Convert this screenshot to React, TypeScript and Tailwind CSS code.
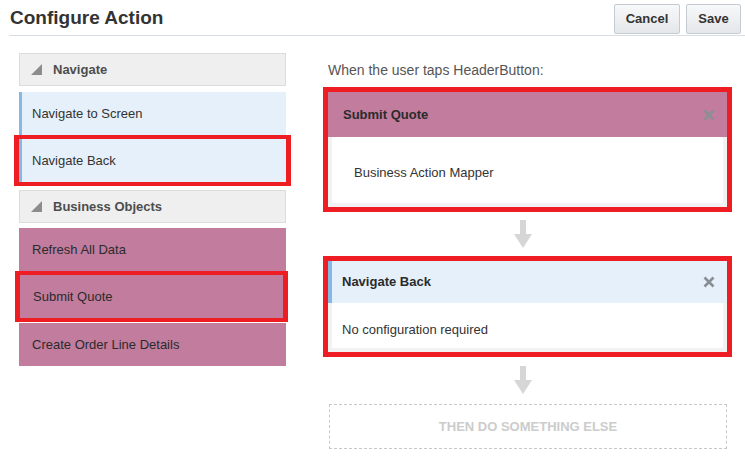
import { ReactNode } from 'react';

const font = { fontFamily: '"Liberation Sans", Arial, sans-serif' };

function CloseIcon({ className }: { className: string }) {
  return (
    <svg width="12" height="12" viewBox="0 0 12 12" className={className}>
      <path d="M1.5 1.5 L10.5 10.5 M10.5 1.5 L1.5 10.5" stroke="currentColor" strokeWidth="2.6" strokeLinecap="butt" />
    </svg>
  );
}

function DownArrow() {
  return (
    <svg width="18" height="28" viewBox="0 0 18 28" className="text-[#d6d6d6]">
      <rect x="6" y="0" width="6" height="16" fill="currentColor" />
      <path d="M0 14 L18 14 L9 28 Z" fill="currentColor" />
    </svg>
  );
}

function Highlight({ children, className = '' }: { children: ReactNode; className?: string }) {
  // red annotation frame drawn around selected items
  return <div className={`border-[5px] border-[#ee1d23] ${className}`}>{children}</div>;
}

function GroupHeader({ label }: { label: string }) {
  return (
    <div className="h-[33px] bg-[#efefef] border border-[#dcdcdc] flex items-center pl-[11px] gap-[11px]">
      <svg width="11" height="11" viewBox="0 0 11 11">
        <path d="M11 0 L11 11 L0 11 Z" fill="#8c8c8c" />
      </svg>
      <span className="text-[13px] font-bold text-[#4d4d4d]">{label}</span>
    </div>
  );
}

function NavItem({ label }: { label: string }) {
  return (
    <div className="h-[43px] bg-[#e6f0fa] border-l-[3px] border-[#85b8e5] flex items-center pl-[10px] text-[13px] text-[#333]">
      {label}
    </div>
  );
}

function BoItem({ label }: { label: string }) {
  return (
    <div className="h-[43px] bg-[#c27c9e] flex items-center pl-[13px] text-[13px] text-[#2b2b2b]">
      {label}
    </div>
  );
}

export default function App() {
  return (
    <div style={font} className="w-[745px] h-[462px] bg-white overflow-hidden">
      {/* Top bar */}
      <div className="flex items-center justify-between h-[36px] ml-[9px] pl-[1px] pr-[4px] border-b border-[#d8dde3]">
        <h1 className="text-[19px] font-bold text-[#333] mt-[1px]">Configure Action</h1>
        <div className="flex gap-[6px] mt-[3px]">
          <button className="w-[66px] h-[30px] rounded-[2px] border border-[#c4cbd2] bg-gradient-to-b from-[#f7f8f9] to-[#e4e7ea] text-[13px] font-bold text-[#333]">
            Cancel
          </button>
          <button className="w-[55px] h-[30px] rounded-[2px] border border-[#c4cbd2] bg-gradient-to-b from-[#f7f8f9] to-[#e4e7ea] text-[13px] font-bold text-[#333]">
            Save
          </button>
        </div>
      </div>

      <div className="flex mt-[17px]">
        {/* Palette */}
        <div className="w-[267px] ml-[19px] flex flex-col">
          <GroupHeader label="Navigate" />
          <div className="mt-[6px] flex flex-col">
            <NavItem label="Navigate to Screen" />
            <Highlight className="-mx-[5px] mt-0 -mb-[2px] relative">
              <div className="-my-px">
                <NavItem label="Navigate Back" />
              </div>
            </Highlight>
          </div>
          <div className="mt-[6px]">
            <GroupHeader label="Business Objects" />
          </div>
          <div className="mt-[5px] flex flex-col">
            <BoItem label="Refresh All Data" />
            <Highlight className="-ml-[4px] -mr-[2px] my-0 relative">
              <div className="-my-px">
                <BoItem label="Submit Quote" />
              </div>
            </Highlight>
            <div className="mt-[1px]">
              <BoItem label="Create Order Line Details" />
            </div>
          </div>
        </div>

        {/* Action chain */}
        <div className="ml-[37px] w-[408px] flex flex-col">
          <p className="text-[14px] text-[#555] ml-[5px] mt-[8px] leading-[18px]">When the user taps HeaderButton:</p>

          <Highlight className="mt-[8px] -mr-[2px] w-[409px]">
            <div className="bg-[#c27c9e] h-[45px] flex items-center justify-between pl-[15px] pr-[12px]">
              <span className="text-[13px] font-bold text-[#2b2b2b]">Submit Quote</span>
              <CloseIcon className="text-[#8a8f94]" />
            </div>
            <div className="h-[70px] border-x-4 border-b-4 border-[#f2f2f2] bg-white flex items-center pl-[22px] pt-[5px] text-[13px] text-[#333]">
              Business Action Mapper
            </div>
          </Highlight>

          <div className="flex justify-center mt-[8px] -ml-[8px]">
            <DownArrow />
          </div>

          <Highlight className="mt-[8px] -mr-[2px] w-[409px]">
            <div className="bg-[#e6f0fa] border-l-4 border-[#85b8e5] h-[42px] flex items-center justify-between pl-[10px] pr-[12px]">
              <span className="text-[13px] font-bold text-[#2b2b2b]">Navigate Back</span>
              <CloseIcon className="text-[#888d92]" />
            </div>
            <div className="h-[49px] border-x-4 border-b-4 border-[#f2f2f2] bg-white flex items-center pl-[10px] pt-[8px] text-[13px] text-[#333]">
              No configuration required
            </div>
          </Highlight>

          <div className="flex justify-center mt-[9px] -ml-[8px]">
            <DownArrow />
          </div>

          <div className="mt-[10px] ml-[6px] w-[398px] h-[45px] border border-dashed border-[#c8c8c8] flex items-center justify-center text-[13px] font-bold text-[#cccccc]">
            THEN DO SOMETHING ELSE
          </div>
        </div>
      </div>
    </div>
  );
}
